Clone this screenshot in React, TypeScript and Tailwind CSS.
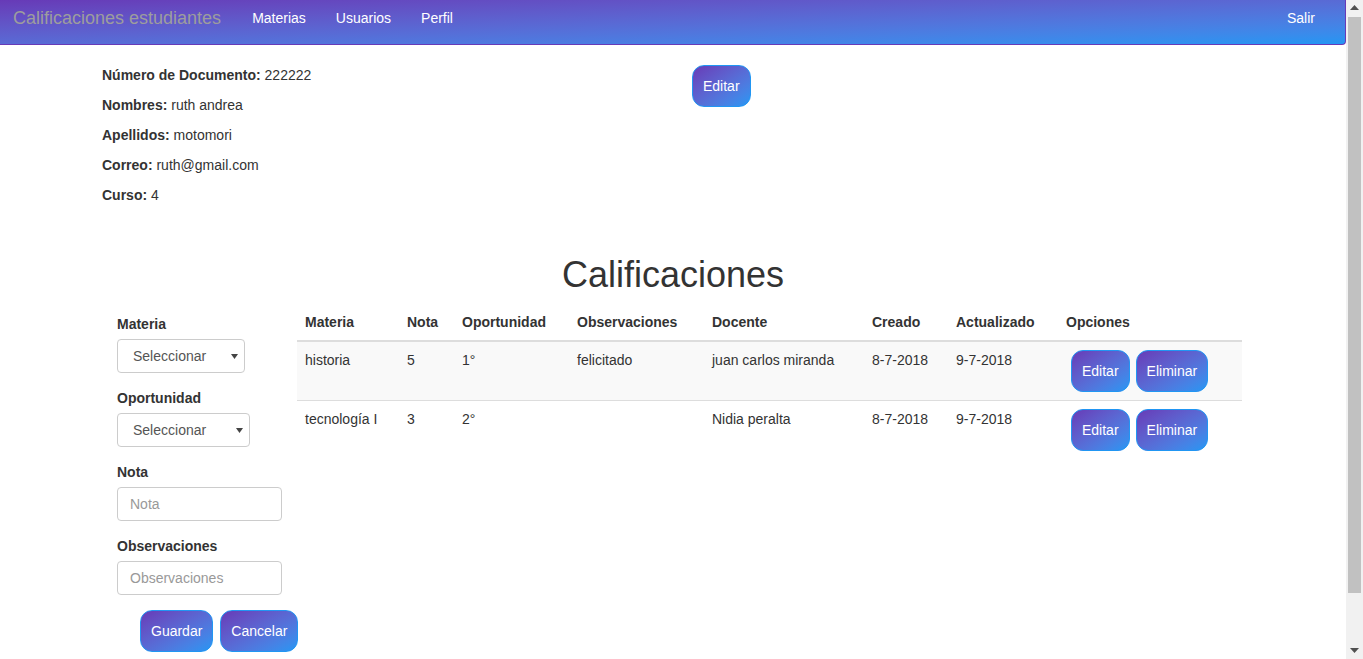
import React from 'react';

const gradBtn =
  'rounded-[12px] border border-[#2196f3] bg-linear-to-br from-[#673ab7] to-[#2196f3] text-white text-[14px] leading-5 py-[10px]';

const rows = [
  { materia: 'historia', nota: '5', op: '1°', obs: 'felicitado', docente: 'juan carlos miranda', creado: '8-7-2018', act: '9-7-2018' },
  { materia: 'tecnología I', nota: '3', op: '2°', obs: '', docente: 'Nidia peralta', creado: '8-7-2018', act: '9-7-2018' },
];

const cols = [
  { label: 'Materia', w: 'w-[102px]' },
  { label: 'Nota', w: 'w-[55px]' },
  { label: 'Oportunidad', w: 'w-[115px]' },
  { label: 'Observaciones', w: 'w-[135px]' },
  { label: 'Docente', w: 'w-[160px]' },
  { label: 'Creado', w: 'w-[84px]' },
  { label: 'Actualizado', w: 'w-[110px]' },
  { label: 'Opciones', w: 'w-[184px]' },
];

const Select: React.FC<{ w: string }> = ({ w }) => (
  <div className={`relative ${w}`}>
    <select className="appearance-none w-full h-[34px] border border-[#ccc] rounded-[4px] bg-white pl-[15px] text-[14px] text-[#555] outline-none">
      <option>Seleccionar</option>
    </select>
    {/* arrow */}
    <svg className="absolute right-[7px] top-[15px] pointer-events-none" width="7" height="5" viewBox="0 0 7 5">
      <path d="M0 0 L7 0 L3.5 5 Z" fill="#444" />
    </svg>
  </div>
);

// window scrollbar as it appears in the screenshot
const Scrollbar = () => (
  <div className="w-[17px] h-[659px] shrink-0 bg-[#f1f1f1] flex flex-col items-center">
    <svg className="mt-[5px] mb-[7px]" width="9" height="5" viewBox="0 0 9 5">
      <path d="M0 5 L9 5 L4.5 0 Z" fill="#505050" />
    </svg>
    <div className="w-[13px] h-[576px] bg-[#c1c1c1]" />
    <div className="flex-1" />
    <svg className="mb-[6px]" width="9" height="5" viewBox="0 0 9 5">
      <path d="M0 0 L9 0 L4.5 5 Z" fill="#505050" />
    </svg>
  </div>
);

export default function App() {
  return (
    <div className="flex h-[659px] overflow-hidden bg-white" style={{ fontFamily: '"Liberation Sans", Arial, sans-serif' }}>
      <div className="w-[1346px] shrink-0 text-[#333] text-[14px] leading-5 pb-[61px]">
        {/* Navbar */}
        <nav className="h-[45px] flex items-start justify-between pt-[8px] bg-linear-to-br from-[#673ab7] to-[#2196f3] border-b border-r border-[#673ab7] rounded-br-[4px]">
          <div className="flex items-center">
            <span className="pl-[13px] text-[18px] leading-5 text-[#9d9d9d]">Calificaciones estudiantes</span>
            <ul className="flex ml-[16px] text-white">
              <li className="px-[15px]">Materias</li>
              <li className="px-[15px]">Usuarios</li>
              <li className="px-[15px]">Perfil</li>
            </ul>
          </div>
          <span className="text-white pr-[30px]">Salir</span>
        </nav>

        {/* Perfil */}
        <div className="w-[1170px] mx-auto px-[14px] pt-[20px] grid grid-cols-2">
          <div>
            <p className="mb-[10px]"><b>Número de Documento:</b> 222222</p>
            <p className="mb-[10px]"><b>Nombres:</b> ruth andrea</p>
            <p className="mb-[10px]"><b>Apellidos:</b> motomori</p>
            <p className="mb-[10px]"><b>Correo:</b> ruth@gmail.com</p>
            <p className="mb-[10px]"><b>Curso:</b> 4</p>
          </div>
          <div className="pl-[19px]">
            <button className={`${gradBtn} px-[10px]`}>Editar</button>
          </div>
        </div>

        <h1 className="mt-[40px] mb-[9px] text-center text-[36px] leading-10 font-medium">Calificaciones</h1>

        <div className="flex pl-[102px]">
          {/* Formulario */}
          <form className="w-[195px] px-[15px] pt-[10px]">
            <label className="block font-bold mb-[5px]">Materia</label>
            <div className="mb-[15px]"><Select w="w-[128px]" /></div>
            <label className="block font-bold mb-[5px]">Oportunidad</label>
            <div className="mb-[15px]"><Select w="w-[133px]" /></div>
            <label className="block font-bold mb-[5px]">Nota</label>
            <input
              placeholder="Nota"
              className="block w-full h-[34px] mb-[15px] border border-[#ccc] rounded-[4px] px-[12px] placeholder:text-[#999] outline-none"
            />
            <label className="block font-bold mb-[5px]">Observaciones</label>
            <input
              placeholder="Observaciones"
              className="block w-full h-[34px] mb-[15px] border border-[#ccc] rounded-[4px] px-[12px] placeholder:text-[#999] outline-none"
            />
            <div className="flex gap-[7px] pl-[23px]">
              <button type="button" className={`${gradBtn} px-[10px]`}>Guardar</button>
              <button type="button" className={`${gradBtn} px-[10px]`}>Cancelar</button>
            </div>
          </form>

          {/* Tabla */}
          <table className="w-[945px] table-fixed border-collapse self-start">
            <thead>
              <tr>
                {cols.map((c) => (
                  <th key={c.label} className={`${c.w} text-left font-bold p-[8px] border-b-2 border-[#ddd]`}>
                    {c.label}
                  </th>
                ))}
              </tr>
            </thead>
            <tbody>
              {rows.map((r, i) => (
                <tr key={i} className={i % 2 === 0 ? 'bg-[#f9f9f9]' : ''}>
                  {[r.materia, r.nota, r.op, r.obs, r.docente, r.creado, r.act].map((v, j) => (
                    <td key={j} className={`p-[8px] align-top ${i > 0 ? 'border-t border-[#ddd]' : ''}`}>{v}</td>
                  ))}
                  <td className={`p-[8px] align-top ${i > 0 ? 'border-t border-[#ddd]' : ''}`}>
                    <div className="flex gap-[6px] pl-[5px]">
                      <button className={`${gradBtn} px-[10px]`}>Editar</button>
                      <button className={`${gradBtn} px-[10px]`}>Eliminar</button>
                    </div>
                  </td>
                </tr>
              ))}
            </tbody>
          </table>
        </div>
      </div>
      <Scrollbar />
    </div>
  );
}
